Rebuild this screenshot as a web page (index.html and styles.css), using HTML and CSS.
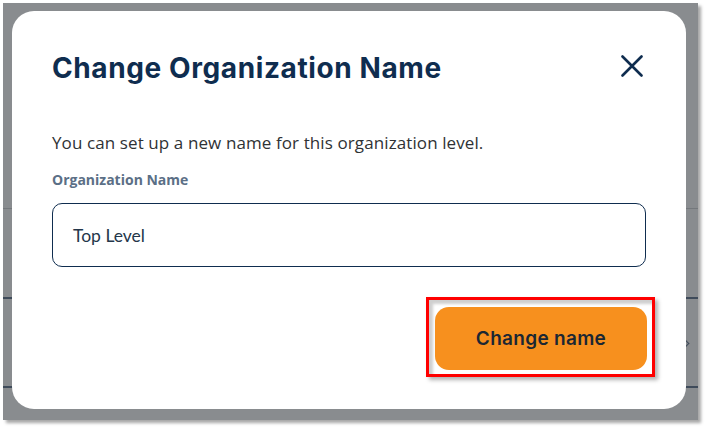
FILE: index.html
```html
<!DOCTYPE html>
<html lang="en">
<head>
<meta charset="utf-8">
<title>Change Organization Name</title>
<link rel="stylesheet" href="styles.css">
</head>
<body>
<div class="screen">
  <div class="bg-row bg-row-top"></div>
  <div class="bg-row bg-row-mid"></div>
  <div class="bg-row bg-row-chev"><span class="chev"></span></div>
  <div class="bg-row bg-row-end"></div>

  <div class="modal">
    <div class="modal-header">
      <h1 class="modal-title">Change Organization Name</h1>
      <button class="close-btn" aria-label="Close">
        <svg width="22" height="22" viewBox="0 0 22 22"><path d="M1.5 1.5 L20.5 20.5 M20.5 1.5 L1.5 20.5" stroke="#0f2d4f" stroke-width="2.6" stroke-linecap="round" fill="none"/></svg>
      </button>
    </div>
    <p class="modal-text">You can set up a new name for this organization level.</p>
    <label class="field-label">Organization Name</label>
    <div class="field-input">Top Level</div>
    <div class="modal-footer">
      <div class="highlight">
        <button class="primary-btn">Change name</button>
      </div>
    </div>
  </div>
</div>
</body>
</html>
```
FILE: styles.css
```css
html, body {
  margin: 0;
  padding: 0;
  background: #ffffff;
}
body {
  width: 708px;
  height: 430px;
  padding: 3px 0 0 3px;
  box-sizing: border-box;
}
.screen {
  position: relative;
  width: 695px;
  height: 417px;
  background: #898c8f;
  box-shadow: 3px 3px 3px rgba(0, 0, 0, 0.35);
  display: flex;
  flex-direction: column;
}
.bg-row {
  box-sizing: border-box;
}
.bg-row-top {
  height: 206px;
  border-bottom: 1px solid #74787c;
}
.bg-row-mid {
  height: 90px;
  border-bottom: 2px solid #3f4b5a;
}
.bg-row-chev {
  height: 89px;
  border-bottom: 2px solid #3f4b5a;
  display: flex;
  align-items: center;
  justify-content: flex-end;
  padding-right: 10px;
}
.chev {
  width: 6px;
  height: 6px;
  border-top: 1.5px solid #3f4b5a;
  border-right: 1.5px solid #3f4b5a;
  transform: rotate(45deg);
  margin-top: 2px;
}
.modal {
  position: absolute;
  top: 8px;
  left: 9px;
  width: 674px;
  height: 398px;
  box-sizing: border-box;
  background: #ffffff;
  border-radius: 22px;
  padding: 40px 40px 0 40px;
  display: flex;
  flex-direction: column;
}
.modal-header {
  display: flex;
  align-items: center;
  justify-content: space-between;
  height: 34px;
}
.modal-title {
  margin: 0;
  font-family: "Inter", "Lato", sans-serif;
  font-weight: 700;
  font-size: 28px;
  line-height: 34px;
  color: #0f2d4f;
  letter-spacing: 0.6px;
}
.close-btn {
  width: 22px;
  height: 22px;
  padding: 0;
  margin: 0 3px 4px 0;
  border: 0;
  background: none;
  display: flex;
}
.modal-text {
  margin: 48px 0 0 0;
  font-family: "Open Sans", sans-serif;
  font-size: 17px;
  line-height: 20px;
  letter-spacing: 0.1px;
  color: #2f3235;
}
.field-label {
  margin-top: 18px;
  font-family: "Open Sans", sans-serif;
  font-weight: 700;
  font-size: 14px;
  line-height: 18px;
  color: #5b6f86;
}
.field-input {
  margin-top: 14px;
  height: 64px;
  box-sizing: border-box;
  border: 1px solid #0f2d4f;
  border-radius: 10px;
  padding: 0 20px;
  display: flex;
  align-items: center;
  font-family: "Lato", sans-serif;
  font-size: 17.5px;
  color: #24364a;
}
.modal-footer {
  margin-top: 30px;
  display: flex;
  justify-content: flex-end;
  margin-right: -9px;
}
.highlight {
  border: 3px solid #ff0000;
  padding: 7px 5px 4px 6px;
  background: #ffffff;
  box-shadow: inset 4px 4px 3px #cfcfcf, 3px 3px 4px rgba(0, 0, 0, 0.3);
}
.primary-btn {
  width: 212px;
  height: 63px;
  border: 0;
  border-radius: 14px;
  background: #f7901e;
  font-family: "Inter", "Lato", sans-serif;
  font-weight: 600;
  font-size: 19px;
  letter-spacing: 0.3px;
  color: #1b2733;
  display: block;
}
```
